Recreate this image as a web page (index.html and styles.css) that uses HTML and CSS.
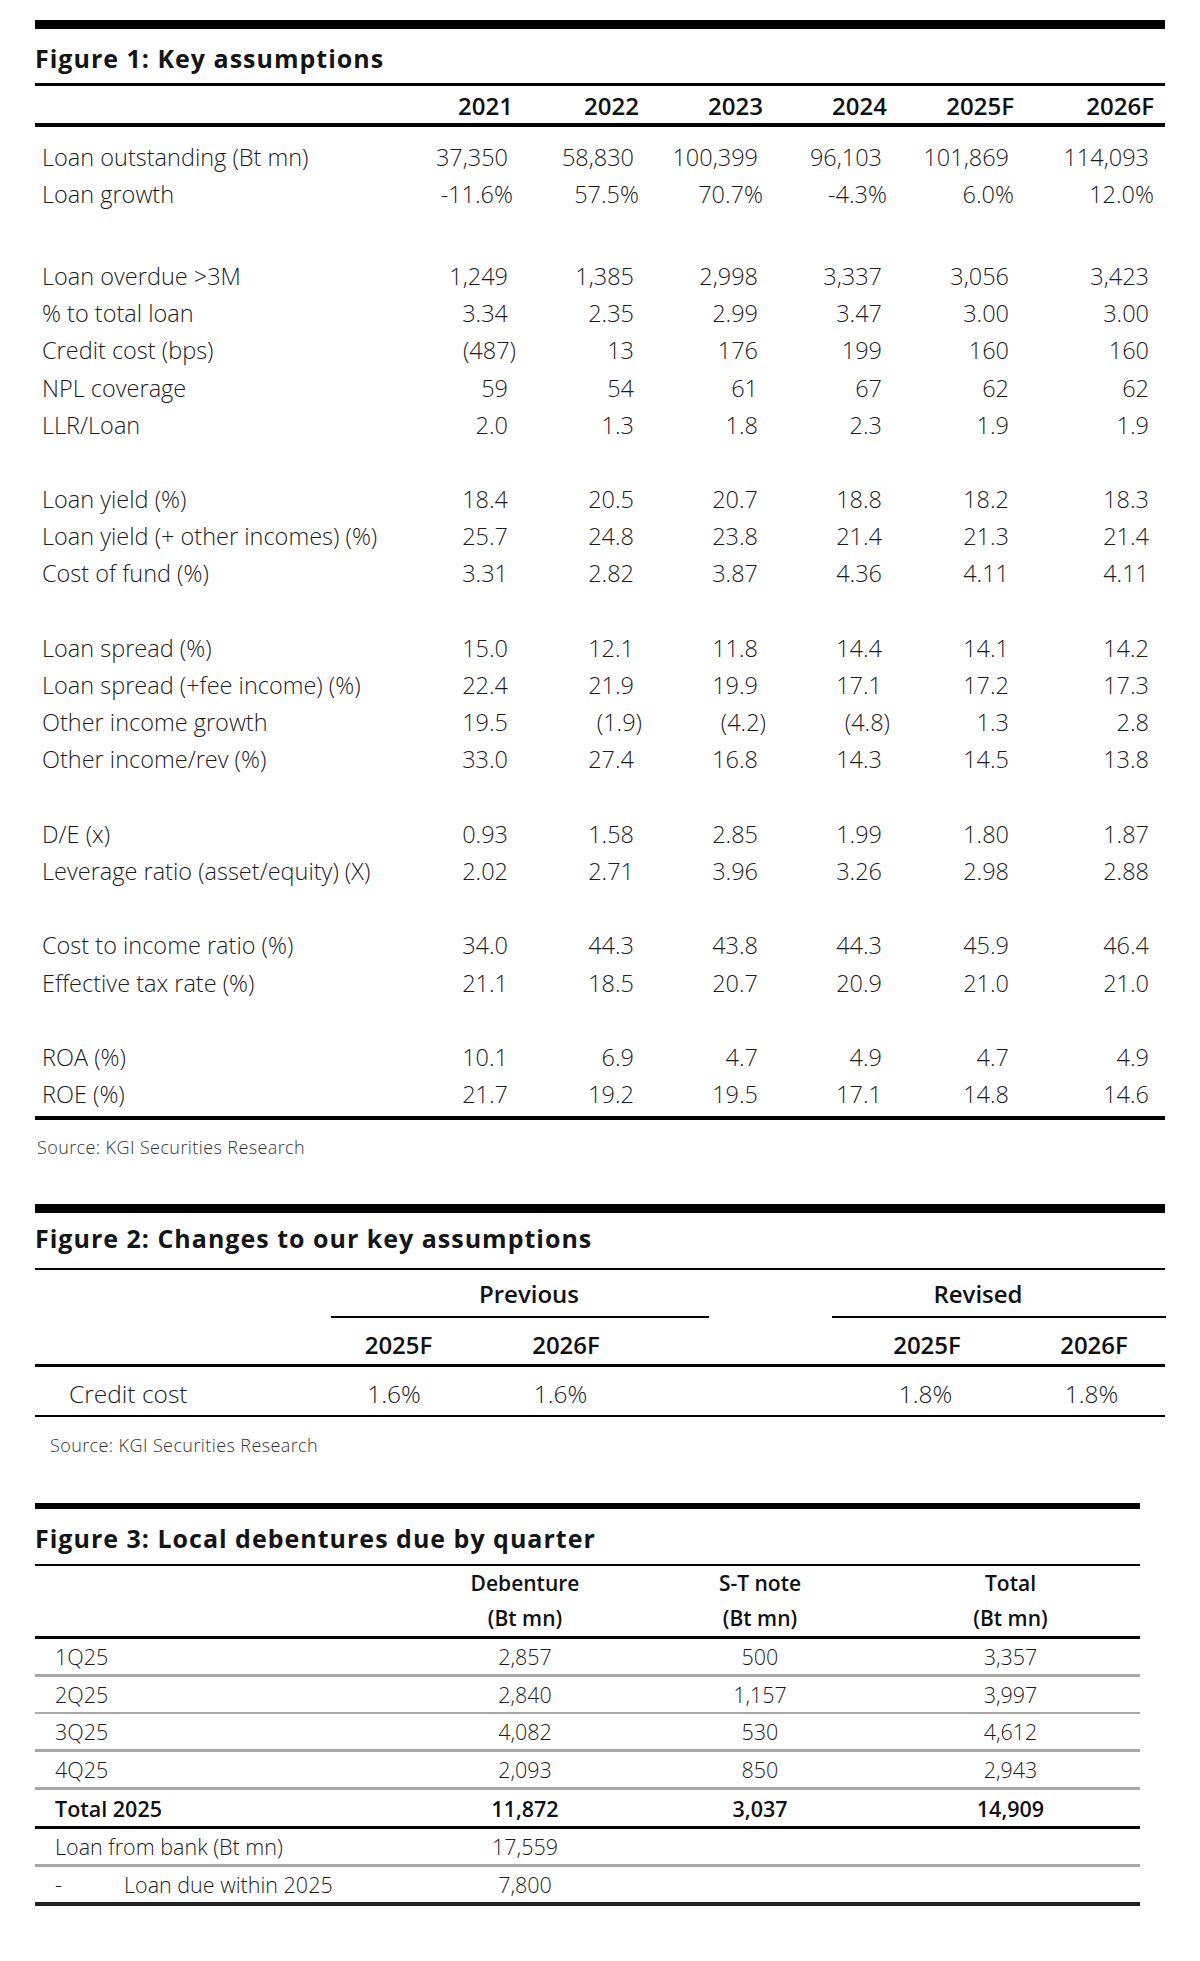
FILE: index.html
```html
<!DOCTYPE html>
<html lang="en">
<head>
<meta charset="utf-8">
<title>Key assumptions</title>
<link rel="stylesheet" href="styles.css">
</head>
<body>
<div class="page">

  <section class="fig fig1">
    <div class="bar"></div>
    <h2 class="title">Figure 1: Key assumptions</h2>
    <div class="t1-row t1-head">
      <span></span><span>2021</span><span>2022</span><span>2023</span><span>2024</span><span>2025F</span><span>2026F</span>
    </div>
    <div class="t1-body">
      <div class="t1-row"><span class="lbl">Loan outstanding (Bt mn)</span><span class="v">37,350</span><span class="v">58,830</span><span class="v">100,399</span><span class="v">96,103</span><span class="v">101,869</span><span class="v">114,093</span></div>
      <div class="t1-row"><span class="lbl">Loan growth</span><span class="v"><span class="pct">-11.6%</span></span><span class="v"><span class="pct">57.5%</span></span><span class="v"><span class="pct">70.7%</span></span><span class="v"><span class="pct">-4.3%</span></span><span class="v"><span class="pct">6.0%</span></span><span class="v"><span class="pct">12.0%</span></span></div>
      <div class="gap1"></div>
      <div class="t1-row"><span class="lbl">Loan overdue &gt;3M</span><span class="v">1,249</span><span class="v">1,385</span><span class="v">2,998</span><span class="v">3,337</span><span class="v">3,056</span><span class="v">3,423</span></div>
      <div class="t1-row"><span class="lbl">% to total loan</span><span class="v">3.34</span><span class="v">2.35</span><span class="v">2.99</span><span class="v">3.47</span><span class="v">3.00</span><span class="v">3.00</span></div>
      <div class="t1-row"><span class="lbl">Credit cost (bps)</span><span class="v"><span class="hang">(487)</span></span><span class="v">13</span><span class="v">176</span><span class="v">199</span><span class="v">160</span><span class="v">160</span></div>
      <div class="t1-row"><span class="lbl">NPL coverage</span><span class="v">59</span><span class="v">54</span><span class="v">61</span><span class="v">67</span><span class="v">62</span><span class="v">62</span></div>
      <div class="t1-row"><span class="lbl">LLR/Loan</span><span class="v">2.0</span><span class="v">1.3</span><span class="v">1.8</span><span class="v">2.3</span><span class="v">1.9</span><span class="v">1.9</span></div>
      <div class="gap"></div>
      <div class="t1-row"><span class="lbl">Loan yield (%)</span><span class="v">18.4</span><span class="v">20.5</span><span class="v">20.7</span><span class="v">18.8</span><span class="v">18.2</span><span class="v">18.3</span></div>
      <div class="t1-row"><span class="lbl">Loan yield (+ other incomes) (%)</span><span class="v">25.7</span><span class="v">24.8</span><span class="v">23.8</span><span class="v">21.4</span><span class="v">21.3</span><span class="v">21.4</span></div>
      <div class="t1-row"><span class="lbl">Cost of fund (%)</span><span class="v">3.31</span><span class="v">2.82</span><span class="v">3.87</span><span class="v">4.36</span><span class="v">4.11</span><span class="v">4.11</span></div>
      <div class="gap"></div>
      <div class="t1-row"><span class="lbl">Loan spread (%)</span><span class="v">15.0</span><span class="v">12.1</span><span class="v">11.8</span><span class="v">14.4</span><span class="v">14.1</span><span class="v">14.2</span></div>
      <div class="t1-row"><span class="lbl">Loan spread (+fee income) (%)</span><span class="v">22.4</span><span class="v">21.9</span><span class="v">19.9</span><span class="v">17.1</span><span class="v">17.2</span><span class="v">17.3</span></div>
      <div class="t1-row"><span class="lbl">Other income growth</span><span class="v">19.5</span><span class="v"><span class="hang">(1.9)</span></span><span class="v"><span class="hang">(4.2)</span></span><span class="v"><span class="hang">(4.8)</span></span><span class="v">1.3</span><span class="v">2.8</span></div>
      <div class="t1-row"><span class="lbl">Other income/rev (%)</span><span class="v">33.0</span><span class="v">27.4</span><span class="v">16.8</span><span class="v">14.3</span><span class="v">14.5</span><span class="v">13.8</span></div>
      <div class="gap"></div>
      <div class="t1-row"><span class="lbl">D/E (x)</span><span class="v">0.93</span><span class="v">1.58</span><span class="v">2.85</span><span class="v">1.99</span><span class="v">1.80</span><span class="v">1.87</span></div>
      <div class="t1-row"><span class="lbl">Leverage ratio (asset/equity) (X)</span><span class="v">2.02</span><span class="v">2.71</span><span class="v">3.96</span><span class="v">3.26</span><span class="v">2.98</span><span class="v">2.88</span></div>
      <div class="gap"></div>
      <div class="t1-row"><span class="lbl">Cost to income ratio (%)</span><span class="v">34.0</span><span class="v">44.3</span><span class="v">43.8</span><span class="v">44.3</span><span class="v">45.9</span><span class="v">46.4</span></div>
      <div class="t1-row"><span class="lbl">Effective tax rate (%)</span><span class="v">21.1</span><span class="v">18.5</span><span class="v">20.7</span><span class="v">20.9</span><span class="v">21.0</span><span class="v">21.0</span></div>
      <div class="gap"></div>
      <div class="t1-row"><span class="lbl">ROA (%)</span><span class="v">10.1</span><span class="v">6.9</span><span class="v">4.7</span><span class="v">4.9</span><span class="v">4.7</span><span class="v">4.9</span></div>
      <div class="t1-row"><span class="lbl">ROE (%)</span><span class="v">21.7</span><span class="v">19.2</span><span class="v">19.5</span><span class="v">17.1</span><span class="v">14.8</span><span class="v">14.6</span></div>
    </div>
    <p class="source src1">Source: KGI Securities Research</p>
  </section>

  <section class="fig fig2">
    <div class="bar"></div>
    <h2 class="title">Figure 2: Changes to our key assumptions</h2>
    <div class="t2-row t2-group">
      <span class="grp prev">Previous</span>
      <span class="grp rev">Revised</span>
    </div>
    <div class="t2-row t2-sub">
      <span></span>
      <span class="c p1">2025F</span>
      <span class="c p2">2026F</span>
      <span></span><span></span>
      <span class="c r1">2025F</span>
      <span class="c r2">2026F</span>
    </div>
    <div class="t2-row t2-val">
      <span class="lbl2">Credit cost</span>
      <span class="c vp1">1.6%</span>
      <span class="c vp2">1.6%</span>
      <span></span><span></span>
      <span class="c vr1">1.8%</span>
      <span class="c vr2">1.8%</span>
    </div>
    <p class="source src2">Source: KGI Securities Research</p>
  </section>

  <section class="fig fig3">
    <div class="bar"></div>
    <h2 class="title">Figure 3: Local debentures due by quarter</h2>
    <div class="t3-row t3-head">
      <span></span>
      <span>Debenture<br>(Bt mn)</span>
      <span>S-T note<br>(Bt mn)</span>
      <span>Total<br>(Bt mn)</span>
    </div>
    <div class="t3-row r-g3"><span class="lbl3">1Q25</span><span>2,857</span><span>500</span><span>3,357</span></div>
    <div class="t3-row r-g2"><span class="lbl3">2Q25</span><span>2,840</span><span>1,157</span><span>3,997</span></div>
    <div class="t3-row r-g3"><span class="lbl3">3Q25</span><span>4,082</span><span>530</span><span>4,612</span></div>
    <div class="t3-row r-g3"><span class="lbl3">4Q25</span><span>2,093</span><span>850</span><span>2,943</span></div>
    <div class="t3-row r-total"><span class="lbl3">Total 2025</span><span>11,872</span><span>3,037</span><span>14,909</span></div>
    <div class="t3-row r-g3"><span class="lbl3">Loan from bank (Bt mn)</span><span>17,559</span><span></span><span></span></div>
    <div class="t3-row r-last"><span class="lbl3 sub"><span class="dash">-</span>Loan due within 2025</span><span>7,800</span><span></span><span></span></div>
  </section>

</div>
</body>
</html>
```

FILE: styles.css
```css
* {
  box-sizing: border-box;
  margin: 0;
  padding: 0;
}

body {
  background: #ffffff;
  font-family: "Open Sans", "Liberation Sans", sans-serif;
  color: #1c1c1c;
}

.page {
  width: 1200px;
  padding-left: 35px;
  padding-bottom: 40px;
}

.fig { width: 1130px; }
.fig3 { width: 1105px; }

.bar { background: #000; }
.fig1 .bar { margin-top: 20px; height: 9px; }
.fig2 .bar { margin-top: 46px; height: 9px; }
.fig3 .bar { margin-top: 47px; height: 6px; }

.title {
  display: flex;
  align-items: center;
  height: 57px;
  font-size: 25px;
  font-weight: 700;
  letter-spacing: 1px;
  color: #151515;
  white-space: nowrap;
}
.fig1 .title { padding-top: 3px; border-bottom: 3px solid #000; }
.fig2 .title { padding-bottom: 4px; border-bottom: 2px solid #000; }
.fig3 .title { padding-top: 4px; border-bottom: 2px solid #000; }

/* Figure 1 */
.t1-row {
  display: grid;
  grid-template-columns: 354px 124px 126px 124px 124px 127px 140px;
  padding-right: 11px;
  align-items: center;
  white-space: nowrap;
}
.t1-head {
  height: 41px;
  padding-top: 2px;
  border-bottom: 4px solid #000;
  font-size: 24px;
  font-weight: 600;
  color: #111;
}
.t1-head span { text-align: right; }

.t1-body {
  padding-top: 11.5px;
  padding-bottom: 3px;
  border-bottom: 4px solid #000;
}
.t1-body .t1-row {
  height: 37.2px;
  font-size: 23.5px;
  font-weight: 300;
}
.lbl { padding-left: 7px; }
.v { text-align: right; padding-right: 5px; }
.hang { margin-right: -8px; }
.pct { margin-right: -5px; }
.gap1 { height: 44.5px; }
.gap { height: 37.2px; }

.source {
  height: 22px;
  line-height: 22px;
  font-size: 18px;
  font-weight: 300;
  letter-spacing: 0.4px;
  color: #333;
  white-space: nowrap;
}
.src1 { margin-top: 16px; padding-left: 2px; }
.src2 { margin-top: 17px; padding-left: 15px; }

/* Figure 2 */
.t2-row {
  display: grid;
  grid-template-columns: 296px 168px 167px 43px 123px 167px 167px;
  white-space: nowrap;
}
.t2-group { height: 48px; }
.grp {
  display: flex;
  align-items: center;
  justify-content: center;
  padding-top: 2px;
  border-bottom: 2px solid #000;
  font-size: 24px;
  font-weight: 600;
  color: #111;
}
.prev { grid-column: 2 / 5; padding-left: 18px; }
.rev { grid-column: 6 / 8; padding-right: 42px; }

.t2-sub {
  height: 49px;
  padding-top: 8px;
  border-bottom: 3px solid #000;
  align-items: center;
  font-size: 24px;
  font-weight: 600;
  color: #111;
}
.t2-val {
  height: 50px;
  padding-top: 5px;
  border-bottom: 2px solid #000;
  align-items: center;
  font-size: 24.5px;
  font-weight: 300;
}
.c { text-align: center; }
.p1, .p2 { padding-right: 33px; }
.r1, .r2 { padding-left: 23px; }
.vp1 { padding-right: 42px; }
.vp2 { padding-right: 44px; }
.vr1 { padding-left: 20px; }
.vr2 { padding-left: 18px; }
.lbl2 { padding-left: 34px; }

/* Figure 3 */
.t3-row {
  display: grid;
  grid-template-columns: 376px 228px 242px 259px;
  align-items: center;
  white-space: nowrap;
  height: 38.2px;
  font-size: 21.5px;
  font-weight: 300;
}
.t3-row > span { text-align: center; }
.t3-row > .lbl3 { text-align: left; padding-left: 20px; }
.t3-head {
  height: 73px;
  border-bottom: 3px solid #000;
  font-size: 21px;
  font-weight: 600;
  line-height: 35px;
  color: #111;
}
.r-g3 { border-bottom: 3px solid #a8a8a8; }
.r-g2 { border-bottom: 2px solid #a8a8a8; height: 37.2px; }
.r-total { border-bottom: 3px solid #000; font-weight: 600; color: #111; }
.r-last { border-bottom: 4px solid #222; height: 39px; }
.sub { padding-left: 30px; }
.dash { display: inline-block; width: 69px; }
```
